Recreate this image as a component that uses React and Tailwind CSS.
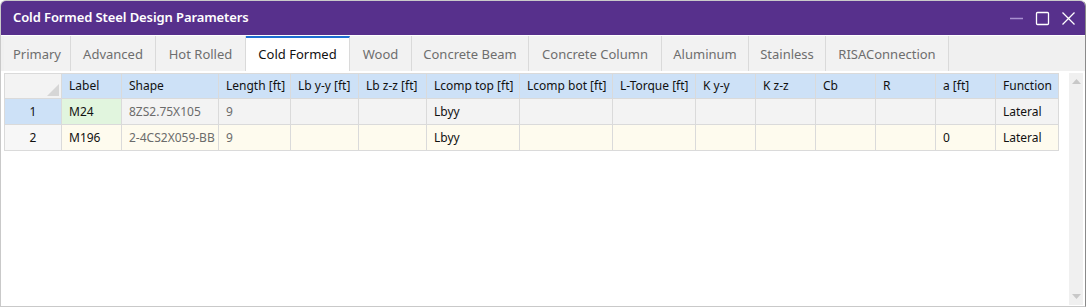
import React from "react";

const tabs = [
  ["Primary", 67],
  ["Advanced", 85],
  ["Hot Rolled", 90],
  ["Cold Formed", 104],
  ["Wood", 62],
  ["Concrete Beam", 117],
  ["Concrete Column", 133],
  ["Aluminum", 87],
  ["Stainless", 77],
  ["RISAConnection", 123],
];

const cols = [
  ["Label", 60],
  ["Shape", 97],
  ["Length [ft]", 72],
  ["Lb y-y [ft]", 68],
  ["Lb z-z [ft]", 68],
  ["Lcomp top [ft]", 93],
  ["Lcomp bot [ft]", 93],
  ["L-Torque [ft]", 83],
  ["K y-y", 60],
  ["K z-z", 60],
  ["Cb", 60],
  ["R", 60],
  ["a [ft]", 60],
  ["Function", 63],
];

const rows = [
  ["M24", "8ZS2.75X105", "9", "", "", "Lbyy", "", "", "", "", "", "", "", "Lateral"],
  ["M196", "2-4CS2X059-BB", "9", "", "", "Lbyy", "", "", "", "", "", "", "0", "Lateral"],
];

const font = { fontFamily: '"Segoe UI", "Noto Sans", "Open Sans", sans-serif' };

export default function App() {
  return (
    <div className="w-[1086px] h-[308px] bg-white" style={font}>
      <div className="w-[1086px] h-[307px] flex flex-col border border-[#c9c9c9] border-r-[#8a8a8a] rounded-t-[6px] overflow-hidden bg-white">
        {/* Title bar */}
        <div className="h-[34px] shrink-0 bg-[#57308c] flex items-center pl-[12px] pr-[9px]">
          <span className="text-white text-[13px] font-semibold tracking-[-0.1px]">
            Cold Formed Steel Design Parameters
          </span>
          <div className="ml-auto flex items-center gap-[11px]">
            <svg width="15" height="15" viewBox="0 0 15 15">
              <line x1="1" y1="7.5" x2="14" y2="7.5" stroke="#a98fd0" strokeWidth="1.3" />
            </svg>
            <svg width="15" height="15" viewBox="0 0 15 15">
              <rect x="1.5" y="1.5" width="12" height="12" rx="1" fill="none" stroke="#ffffff" strokeWidth="1.3" />
            </svg>
            <svg width="15" height="15" viewBox="0 0 15 15">
              <path d="M1.5 1.5 L13.5 13.5 M13.5 1.5 L1.5 13.5" stroke="#ffffff" strokeWidth="1.3" />
            </svg>
          </div>
        </div>
        {/* Tab strip */}
        <div className="h-[36px] shrink-0 bg-[#f0f0f0] border-t border-t-white flex pl-[3px]">
          {tabs.map(([t, w]) => {
            const active = t === "Cold Formed";
            return (
              <div
                key={t}
                style={{ width: w }}
                className={
                  active
                    ? "h-full flex items-center justify-center bg-white border-t-2 border-t-[#1e6fd1] border-r border-r-[#dadada] text-[13px] text-[#111]"
                    : "h-full flex items-center justify-center bg-[#f2f2f2] border-r border-r-[#dadada] text-[13px] text-[#6e6e6e]"
                }
              >
                <span className={active ? "" : "pt-[2px]"}>{t}</span>
              </div>
            );
          })}
        </div>
        {/* Body */}
        <div className="flex-1 flex pt-[2px] pl-[3px] bg-white">
          <div className="flex-1">
            {/* header */}
            <div className="flex h-[26px] text-[12px] text-[#111]">
              <div className="w-[58px] shrink-0 relative bg-[#f3f3f3] border border-[#dadada]">
                <svg className="absolute right-[2px] bottom-[2px]" width="12" height="12" viewBox="0 0 12 12">
                  <polygon points="12,0 12,12 0,12" fill="#d6d6d6" />
                </svg>
              </div>
              {cols.map(([c, w]) => (
                <div
                  key={c}
                  style={{ width: w }}
                  className="shrink-0 bg-[#cde1f7] border-y border-r border-[#dadada] flex items-center pl-[7px] whitespace-nowrap"
                >
                  {c}
                </div>
              ))}
            </div>
            {rows.map((r, ri) => (
              <div key={ri} className="flex h-[26px] text-[12px]">
                <div
                  className={
                    ri === 0
                      ? "w-[58px] shrink-0 bg-[#cde1f7] border-x border-b border-[#dadada] flex items-center justify-center text-[#111]"
                      : "w-[58px] shrink-0 bg-[#f7f7f7] border-x border-b border-[#dadada] flex items-center justify-center text-[#111]"
                  }
                >
                  {ri + 1}
                </div>
                {r.map((v, ci) => {
                  const w = cols[ci][1];
                  let bg = ri === 0 ? "bg-[#f3f3f3]" : "bg-[#fefbee]";
                  if (ri === 0 && ci === 0) bg = "bg-[#e1f5de]";
                  const grey = ci === 1 || ci === 2;
                  return (
                    <div
                      key={ci}
                      style={{ width: w }}
                      className={`shrink-0 ${bg} border-r border-b border-[#dadada] flex items-center pl-[7px] whitespace-nowrap ${grey ? "text-[#6b6b6b]" : "text-[#111]"}`}
                    >
                      {v}
                    </div>
                  );
                })}
              </div>
            ))}
          </div>
          {/* scrollbar */}
          <div className="w-[14px] mr-[2px] mb-[1px] bg-[#f0f0f0] flex flex-col justify-between items-center py-[6px]">
            <svg width="9" height="5" viewBox="0 0 9 5">
              <polygon points="0,5 9,5 4.5,0" fill="#c8c8c8" />
            </svg>
            <svg width="9" height="5" viewBox="0 0 9 5">
              <polygon points="0,0 9,0 4.5,5" fill="#c8c8c8" />
            </svg>
          </div>
        </div>
      </div>
    </div>
  );
}
